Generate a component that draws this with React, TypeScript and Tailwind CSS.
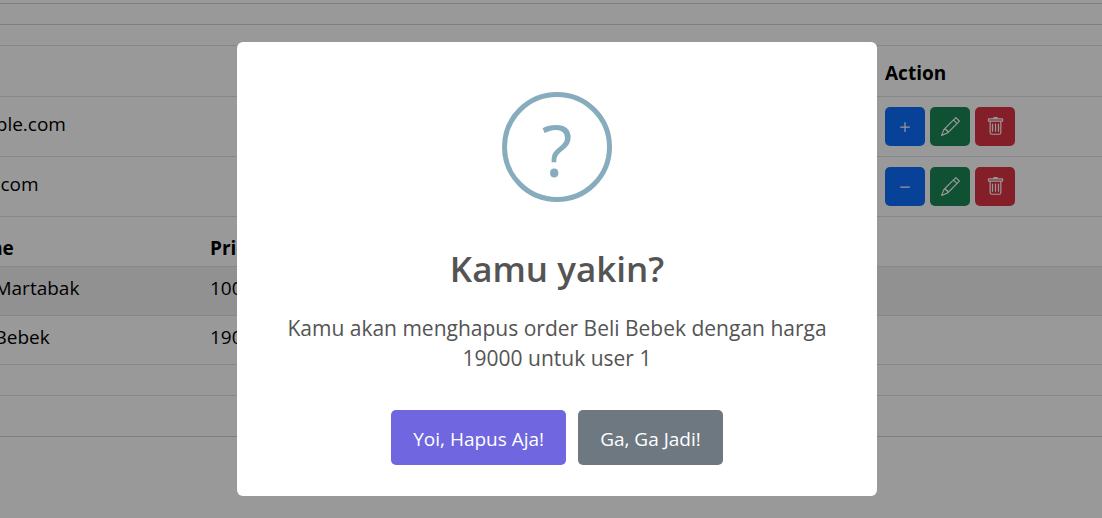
import { ReactNode } from "react";
import { BsDash, BsPencil, BsPlus, BsTrash } from "react-icons/bs";

type User = { email: string; expanded: boolean };
type Order = { name: string; price: number };

const users: User[] = [
  { email: "example.com", expanded: false },
  { email: "email.com", expanded: true },
];

const orders: Order[] = [
  { name: "Beli Martabak", price: 10000 },
  { name: "Beli Bebek", price: 19000 },
];

function ActionButton({ label, color, children }: { label: string; color: string; children: ReactNode }) {
  return (
    <button
      type="button"
      aria-label={label}
      className={`flex h-[39px] w-10 items-center justify-center rounded-[5px] text-white ${color}`}
    >
      {children}
    </button>
  );
}

function OrderTable() {
  return (
    <table className="w-full table-fixed border-separate border-spacing-0 text-left">
      <thead>
        <tr>
          <th className="h-[50px] w-[263px] border-b border-[#dee2e6] pt-3 pl-5 font-bold">Name</th>
          <th className="h-[50px] border-b border-[#dee2e6] px-2.5 pt-3 font-bold">Price</th>
        </tr>
      </thead>
      <tbody>
        {orders.map((order) => (
          <tr key={order.name} className="odd:bg-[#f2f2f2]">
            <td className="h-[49px] border-b border-[#dee2e6] pb-1.5 pl-5">{order.name}</td>
            <td className="h-[49px] border-b border-[#dee2e6] px-2.5 pb-1.5">{order.price}</td>
          </tr>
        ))}
      </tbody>
    </table>
  );
}

function UserTable() {
  return (
    <table className="w-full table-fixed border-separate border-spacing-0 text-left">
      <thead>
        <tr>
          <th className="h-[51px] border-b border-[#dee2e6] px-2.5 pt-1 font-bold" aria-label="Email" />
          <th className="h-[51px] w-[227px] border-b border-[#dee2e6] px-2.5 pt-1 font-bold">Action</th>
        </tr>
      </thead>
      <tbody>
        {users.map((user) => (
          <tr key={user.email}>
            <td className="border-b border-[#dee2e6] px-2.5 pb-1.5">{user.email}</td>
            <td className="border-b border-[#dee2e6] px-2.5 py-[10px]">
              <div className="flex gap-[5px]">
                <ActionButton label="Toggle orders" color="bg-[#0d6efd]">
                  {user.expanded ? <BsDash size={20} /> : <BsPlus size={20} />}
                </ActionButton>
                <ActionButton label="Edit" color="bg-[#198754]">
                  <BsPencil size={19} />
                </ActionButton>
                <ActionButton label="Delete" color="bg-[#dc3545]">
                  <BsTrash size={19} />
                </ActionButton>
              </div>
            </td>
          </tr>
        ))}
        <tr>
          <td colSpan={2} className="border-b border-[#dee2e6] p-0 pb-[30px]">
            <OrderTable />
          </td>
        </tr>
      </tbody>
    </table>
  );
}

function ConfirmDialog() {
  return (
    <div className="fixed inset-0 flex items-center justify-center bg-black/40 pt-5 pl-3">
      <div
        role="dialog"
        aria-modal="true"
        aria-labelledby="confirm-title"
        className="flex w-[640px] flex-col items-center rounded-md bg-white pt-[50px] pb-[31px] text-[#545454]"
      >
        <div className="flex size-[110px] items-center justify-center rounded-full border-5 border-[#87adbd] pt-1 text-[72px] leading-none text-[#87adbd]">
          ?
        </div>
        <h2 id="confirm-title" className="mt-[42px] text-[35px] leading-[50px] font-semibold">
          Kamu yakin?
        </h2>
        <p className="mt-[19px] px-10 text-center text-[21px] leading-[30px]">
          Kamu akan menghapus order Beli Bebek dengan harga 19000 untuk user 1
        </p>
        <div className="mt-[37px] flex gap-3">
          <button type="button" className="h-[55px] rounded-[5px] bg-[#7066e0] px-[22px] pt-0.5 text-[19px] text-white">
            Yoi, Hapus Aja!
          </button>
          <button type="button" className="h-[55px] rounded-[5px] bg-[#6e7881] px-[22px] pt-0.5 text-[19px] text-white">
            Ga, Ga Jadi!
          </button>
        </div>
      </div>
    </div>
  );
}

export default function App() {
  return (
    <div className="min-h-screen overflow-hidden bg-white font-['Open_Sans',sans-serif] text-[19px] leading-[28px] text-black">
      <main className="-ml-[63px] pt-[3px]">
        <div className="h-[21px] border-t border-[#d3d3d3]" />
        <section className="border-t border-b border-[#d3d3d3] pt-5 pb-10">
          <div className="border-t border-[#dee2e6]">
            <UserTable />
          </div>
        </section>
      </main>
      <ConfirmDialog />
    </div>
  );
}
